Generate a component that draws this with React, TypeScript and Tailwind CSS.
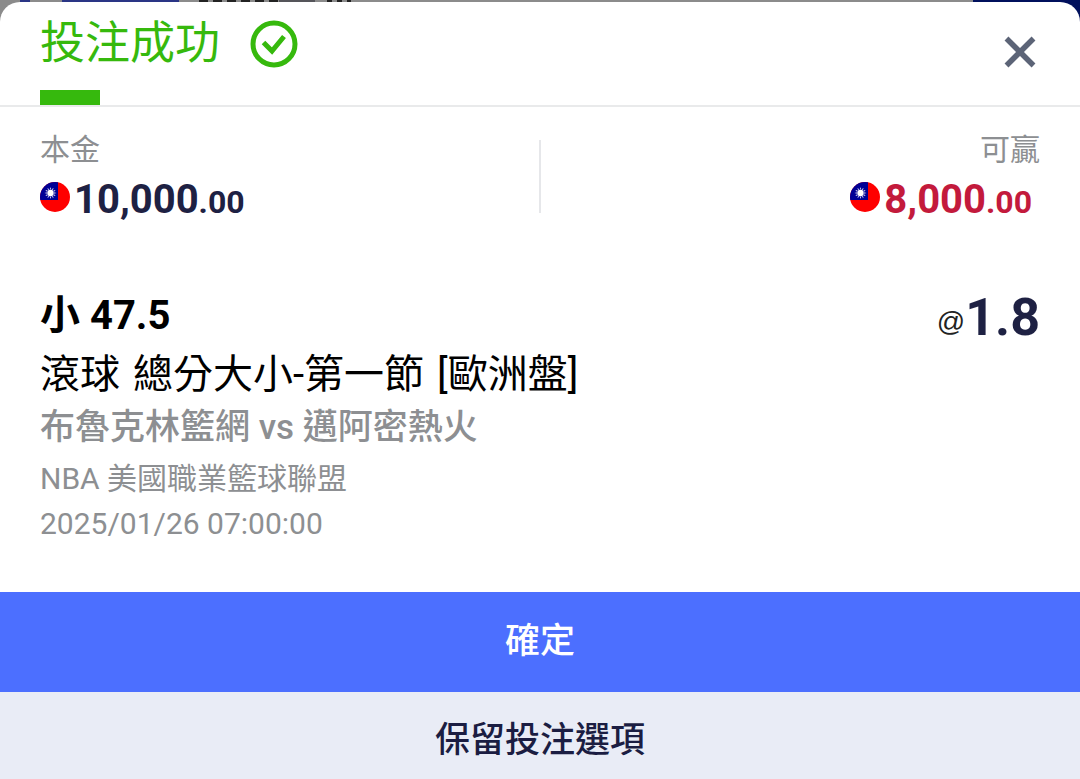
import React from "react";

const FlagIcon: React.FC = () => (
  <svg viewBox="0 0 30 30" className="size-[30px] shrink-0" aria-hidden="true">
    <clipPath id="flag-circle">
      <circle cx="15" cy="15" r="15" />
    </clipPath>
    <g clipPath="url(#flag-circle)">
      <rect width="30" height="30" fill="#fe0000" />
      <rect width="18" height="18" fill="#000095" />
      {[0, 30, 60, 90, 120, 150].map((angle) => (
        <path
          key={angle}
          d="M10.5 5 L12.1 11 L10.5 17 L8.9 11 Z"
          fill="#fff"
          transform={`rotate(${angle} 10.5 11)`}
        />
      ))}
      <circle cx="10.5" cy="11" r="3.7" fill="#000095" />
      <circle cx="10.5" cy="11" r="3.2" fill="#fff" />
    </g>
  </svg>
);

interface AmountProps {
  whole: string;
  cents: string;
}

const Amount: React.FC<AmountProps> = ({ whole, cents }) => (
  <div className="flex h-10 items-start gap-1 font-bold leading-10">
    <div className="pt-[2px]">
      <FlagIcon />
    </div>
    <span className="text-[40px]">
      {whole}
      <span className="text-[32px]">{cents}</span>
    </span>
  </div>
);

const App: React.FC = () => {
  return (
    <div className="relative min-h-screen bg-[#8b8b8b] pt-[2px] font-['Roboto','Noto_Sans_CJK_TC',sans-serif]">
      {/* Page behind the sheet */}
      <div className="absolute inset-x-0 top-0 flex h-8" aria-hidden="true">
        <div className="ml-5 h-[2px] w-[10px] bg-[#2a3585]" />
        <div className="ml-8 h-[2px] w-[117px] bg-[#2a3585]" />
        <div className="ml-5 h-[2px] w-[80px] bg-[repeating-linear-gradient(90deg,#222_0_9px,#8b8b8b_9px_14px)]" />
        <div className="h-[2px] w-[36px] bg-[#55555a]" />
        <div className="ml-3 h-[2px] w-[24px] bg-[repeating-linear-gradient(90deg,#222_0_5px,#8b8b8b_5px_10px)]" />
        <div className="ml-auto w-[107px] bg-[#00105c]" />
      </div>

      <section className="relative flex min-h-[calc(100vh-2px)] flex-col overflow-hidden rounded-t-[20px] bg-white">
        {/* Header */}
        <header className="flex items-start justify-between border-b-2 border-[#e9eaeb] pr-11 pl-10">
          <div>
            <div className="flex h-[88px] items-start gap-[30px] text-[#36b90d]">
              <h1 className="pt-[14px] text-[45px] leading-[56px]">投注成功</h1>
              <svg viewBox="0 0 48 48" className="mt-[18px] size-12" fill="none" stroke="currentColor" aria-hidden="true">
                <circle cx="24" cy="24" r="21" strokeWidth="5" />
                <path d="M13.5 22.5 L22 31 L34 16.5" strokeWidth="5" />
              </svg>
            </div>
            <div className="h-[15px] w-[60px] bg-[#36b90d]" />
          </div>
          <button type="button" aria-label="關閉" className="mt-[34px] text-[#5c6477]">
            <svg viewBox="0 0 32 32" className="size-8" fill="none" stroke="currentColor" strokeWidth="5.5">
              <path d="M2.5 2.5 L29.5 29.5 M29.5 2.5 L2.5 29.5" />
            </svg>
          </button>
        </header>

        {/* Stake and payout */}
        <div className="flex items-center px-10 pt-[25px]">
          <div className="flex-1 text-[#1e2143]">
            <p className="text-3xl leading-9 text-[#8d8f92]">本金</p>
            <div className="mt-3">
              <Amount whole="10,000" cents=".00" />
            </div>
          </div>
          <div className="h-[73px] w-[2px] bg-[#e6e7ea]" />
          <div className="flex flex-1 flex-col items-end text-[#c31a3c]">
            <p className="text-3xl leading-9 text-[#8d8f92]">可贏</p>
            <div className="mt-3 mr-2">
              <Amount whole="8,000" cents=".00" />
            </div>
          </div>
        </div>

        {/* Bet details */}
        <div className="px-10 pt-[66px] pb-[46px]">
          <div className="flex items-center justify-between">
            <h2 className="text-[40px] leading-[56px] font-bold text-black">小 47.5</h2>
            <p className="flex items-center pt-1 text-[#1e2143]">
              <span className="pt-2 font-['Liberation_Sans',sans-serif] text-[28px] leading-8 text-[#222]">@</span>
              <span className="text-[52px] leading-[56px] font-bold">1.8</span>
            </p>
          </div>
          <p className="flex flex-wrap gap-x-[13px] text-[40px] leading-[58px] text-black">
            <span>滾球</span>
            <span>總分大小-第一節</span>
            <span>[歐洲盤]</span>
          </p>
          <p className="text-[35px] leading-[48px] font-medium text-[#8d8f92]">布魯克林籃網 vs 邁阿密熱火</p>
          <p className="mt-1 text-3xl leading-[46px] text-[#8d8f92]">NBA 美國職業籃球聯盟</p>
          <p className="text-3xl leading-[44px] text-[#8d8f92]">2025/01/26 07:00:00</p>
        </div>

        {/* Actions */}
        <button type="button" className="h-[100px] w-full bg-[#4c6fff] text-[35px] font-medium text-white">
          確定
        </button>
        <button type="button" className="w-full grow bg-[#e9ecf6] pt-[22px] pb-3 text-[35px] leading-[52px] font-medium text-[#1b1d42]">
          保留投注選項
        </button>
      </section>
    </div>
  );
};

export default App;
